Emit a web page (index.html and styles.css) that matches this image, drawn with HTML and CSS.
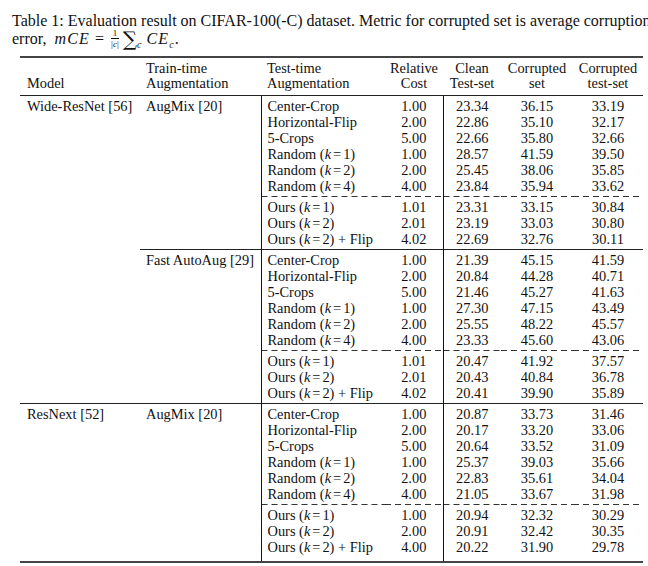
FILE: index.html
```html
<!DOCTYPE html>
<html>
<head>
<meta charset="utf-8">
<link rel="stylesheet" href="styles.css">
</head>
<body>
<div class="caption">
  <div class="line">Table 1: Evaluation result on CIFAR-100(-C) dataset. Metric for corrupted set is average corruption</div>
  <div class="line">error, <span class="math"><i class="mv">mCE</i><span class="op">=</span><span class="frac"><span class="num">1</span><span class="den">|<i>c</i>|</span></span><span class="sum">&sum;</span><sub><i>c</i></sub><i class="mv ce">CE</i><sub><i>c</i></sub></span>.</div>
</div>
<table class="tbl">
  <colgroup>
    <col class="w1"><col class="w2"><col class="w3"><col class="w4"><col class="w5"><col class="w6"><col class="w7">
  </colgroup>
  <thead>
    <tr>
      <th class="c1 bottom">Model</th>
      <th class="c2">Train-time<br>Augmentation</th>
      <th class="c3h">Test-time<br>Augmentation</th>
      <th class="ctr">Relative<br>Cost</th>
      <th class="ctr">Clean<br>Test-set</th>
      <th class="ctr">Corrupted<br>set</th>
      <th class="ctr">Corrupted<br>test-set</th>
    </tr>
  </thead>
  <tbody>
    <!-- Group 1 -->
    <tr class="first">
      <td class="c1" rowspan="20">Wide-ResNet [56]</td>
      <td class="c2" rowspan="10">AugMix [20]</td>
      <td class="c3">Center-Crop</td><td class="ctr">1.00</td><td class="c5">23.34</td><td class="ctr">36.15</td><td class="ctr">33.19</td>
    </tr>
    <tr><td class="c3">Horizontal-Flip</td><td class="ctr">2.00</td><td class="c5">22.86</td><td class="ctr">35.10</td><td class="ctr">32.17</td></tr>
    <tr><td class="c3">5-Crops</td><td class="ctr">5.00</td><td class="c5">22.66</td><td class="ctr">35.80</td><td class="ctr">32.66</td></tr>
    <tr><td class="c3">Random (<i>k</i><span class="eq">=</span>1)</td><td class="ctr">1.00</td><td class="c5">28.57</td><td class="ctr">41.59</td><td class="ctr">39.50</td></tr>
    <tr><td class="c3">Random (<i>k</i><span class="eq">=</span>2)</td><td class="ctr">2.00</td><td class="c5">25.45</td><td class="ctr">38.06</td><td class="ctr">35.85</td></tr>
    <tr><td class="c3">Random (<i>k</i><span class="eq">=</span>4)</td><td class="ctr">4.00</td><td class="c5">23.84</td><td class="ctr">35.94</td><td class="ctr">33.62</td></tr>
    <tr class="dash"><td class="c3"></td><td></td><td class="c5"></td><td></td><td></td></tr>
    <tr><td class="c3">Ours (<i>k</i><span class="eq">=</span>1)</td><td class="ctr">1.01</td><td class="c5">23.31</td><td class="ctr">33.15</td><td class="ctr">30.84</td></tr>
    <tr><td class="c3">Ours (<i>k</i><span class="eq">=</span>2)</td><td class="ctr">2.01</td><td class="c5">23.19</td><td class="ctr">33.03</td><td class="ctr">30.80</td></tr>
    <tr class="last"><td class="c3">Ours (<i>k</i><span class="eq">=</span>2) + Flip</td><td class="ctr">4.02</td><td class="c5">22.69</td><td class="ctr">32.76</td><td class="ctr">30.11</td></tr>
    <!-- Group 2 -->
    <tr class="first">
      <td class="c2" rowspan="10">Fast AutoAug [29]</td>
      <td class="c3">Center-Crop</td><td class="ctr">1.00</td><td class="c5">21.39</td><td class="ctr">45.15</td><td class="ctr">41.59</td>
    </tr>
    <tr><td class="c3">Horizontal-Flip</td><td class="ctr">2.00</td><td class="c5">20.84</td><td class="ctr">44.28</td><td class="ctr">40.71</td></tr>
    <tr><td class="c3">5-Crops</td><td class="ctr">5.00</td><td class="c5">21.46</td><td class="ctr">45.27</td><td class="ctr">41.63</td></tr>
    <tr><td class="c3">Random (<i>k</i><span class="eq">=</span>1)</td><td class="ctr">1.00</td><td class="c5">27.30</td><td class="ctr">47.15</td><td class="ctr">43.49</td></tr>
    <tr><td class="c3">Random (<i>k</i><span class="eq">=</span>2)</td><td class="ctr">2.00</td><td class="c5">25.55</td><td class="ctr">48.22</td><td class="ctr">45.57</td></tr>
    <tr><td class="c3">Random (<i>k</i><span class="eq">=</span>4)</td><td class="ctr">4.00</td><td class="c5">23.33</td><td class="ctr">45.60</td><td class="ctr">43.06</td></tr>
    <tr class="dash"><td class="c3"></td><td></td><td class="c5"></td><td></td><td></td></tr>
    <tr><td class="c3">Ours (<i>k</i><span class="eq">=</span>1)</td><td class="ctr">1.01</td><td class="c5">20.47</td><td class="ctr">41.92</td><td class="ctr">37.57</td></tr>
    <tr><td class="c3">Ours (<i>k</i><span class="eq">=</span>2)</td><td class="ctr">2.01</td><td class="c5">20.43</td><td class="ctr">40.84</td><td class="ctr">36.78</td></tr>
    <tr class="last"><td class="c3">Ours (<i>k</i><span class="eq">=</span>2) + Flip</td><td class="ctr">4.02</td><td class="c5">20.41</td><td class="ctr">39.90</td><td class="ctr">35.89</td></tr>
    <!-- Group 3 -->
    <tr class="first">
      <td class="c1" rowspan="10">ResNext [52]</td>
      <td class="c2" rowspan="10">AugMix [20]</td>
      <td class="c3">Center-Crop</td><td class="ctr">1.00</td><td class="c5">20.87</td><td class="ctr">33.73</td><td class="ctr">31.46</td>
    </tr>
    <tr><td class="c3">Horizontal-Flip</td><td class="ctr">2.00</td><td class="c5">20.17</td><td class="ctr">33.20</td><td class="ctr">33.06</td></tr>
    <tr><td class="c3">5-Crops</td><td class="ctr">5.00</td><td class="c5">20.64</td><td class="ctr">33.52</td><td class="ctr">31.09</td></tr>
    <tr><td class="c3">Random (<i>k</i><span class="eq">=</span>1)</td><td class="ctr">1.00</td><td class="c5">25.37</td><td class="ctr">39.03</td><td class="ctr">35.66</td></tr>
    <tr><td class="c3">Random (<i>k</i><span class="eq">=</span>2)</td><td class="ctr">2.00</td><td class="c5">22.83</td><td class="ctr">35.61</td><td class="ctr">34.04</td></tr>
    <tr><td class="c3">Random (<i>k</i><span class="eq">=</span>4)</td><td class="ctr">4.00</td><td class="c5">21.05</td><td class="ctr">33.67</td><td class="ctr">31.98</td></tr>
    <tr class="dash"><td class="c3"></td><td></td><td class="c5"></td><td></td><td></td></tr>
    <tr><td class="c3">Ours (<i>k</i><span class="eq">=</span>1)</td><td class="ctr">1.00</td><td class="c5">20.94</td><td class="ctr">32.32</td><td class="ctr">30.29</td></tr>
    <tr><td class="c3">Ours (<i>k</i><span class="eq">=</span>2)</td><td class="ctr">2.00</td><td class="c5">20.91</td><td class="ctr">32.42</td><td class="ctr">30.35</td></tr>
    <tr class="last final"><td class="c3">Ours (<i>k</i><span class="eq">=</span>2) + Flip</td><td class="ctr">4.00</td><td class="c5">20.22</td><td class="ctr">31.90</td><td class="ctr">29.78</td></tr>
  </tbody>
</table>
</body>
</html>
```

FILE: styles.css
```css
html, body {
  margin: 0;
  padding: 0;
  overflow: hidden;
  background: #fff;
}

body {
  font-family: "Liberation Serif", "Times New Roman", serif;
  font-size: 14.4px;
  color: #111;
  width: 648px;
  height: 566px;
}

.caption {
  padding: 12px 0 0 12px;
  white-space: nowrap;
  font-size: 16px;
}

.caption .line {
  height: 17px;
  line-height: 17px;
}

.math {
  margin-left: 4px;
}

.math .mv {
  letter-spacing: 1.2px;
}

.math .op {
  margin: 0 7px 0 5px;
}

.frac {
  display: inline-block;
  vertical-align: -3px;
  text-align: center;
  font-size: 9px;
  line-height: 8px;
  margin: 0 4px 0 0;
}

.frac .num {
  display: block;
  border-bottom: 1px solid #111;
  padding: 0 1px 1px;
}

.frac .den {
  display: block;
  padding-top: 1px;
}

.sum {
  font-family: "DejaVu Serif", serif;
  font-size: 20px;
  line-height: 0;
  vertical-align: -2px;
}

.caption sub {
  font-size: 10px;
  vertical-align: -4px;
  line-height: 0;
  margin-right: 5px;
}

.caption .ce + sub {
  margin-right: 1px;
}

.tbl {
  margin: 10px 0 0 20px;
  border-collapse: collapse;
  table-layout: fixed;
  width: 623px;
  border-top: 2px solid #444;
  border-bottom: 2px solid #444;
}

.w1 { width: 120px; }
.w2 { width: 121px; }
.w3 { width: 124px; }
.w4 { width: 58px; }
.w5 { width: 58px; }
.w6 { width: 72px; }
.w7 { width: 70px; }

th {
  font-weight: normal;
  line-height: 15px;
  padding: 3px 0 4px;
  vertical-align: bottom;
  border-bottom: 1px solid #222;
  text-align: left;
}

th.c1 { padding-left: 7px; }
th.c2 { padding-left: 6px; }
th.c3h { padding-left: 6px; }
th.ctr { text-align: center; }

td {
  padding: 0;
  height: 16px;
  line-height: 16px;
  white-space: nowrap;
  vertical-align: middle;
}

td.c1 {
  padding-left: 7px;
  vertical-align: top;
}

td.c2 {
  padding-left: 6px;
  vertical-align: top;
}

td.c3 {
  padding-left: 6px;
  border-left: 1px solid #111;
}

td.c5 {
  text-align: center;
  border-left: 1px solid #111;
}

td.ctr {
  text-align: center;
}

tr.first > td {
  border-top: 1px solid #222;
  padding-top: 2px;
}

tr.last > td {
  padding-bottom: 2px;
}

tr.final > td {
  padding-bottom: 6px;
}

tr.dash > td {
  height: 5px;
  line-height: 0;
  font-size: 0;
  background-image: linear-gradient(90deg, #333 65%, transparent 65%);
  background-size: 10px 1px;
  background-repeat: repeat-x;
  background-position: 0 2px;
}

.eq {
  margin: 0 2px;
}
```
